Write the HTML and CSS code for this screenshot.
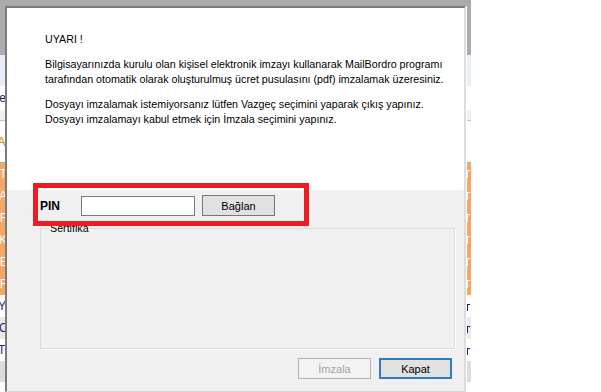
FILE: index.html
```html
<!DOCTYPE html>
<html lang="tr">
<head>
  <meta charset="UTF-8" />
  <title>MailBordro - İmzala</title>
  <link rel="stylesheet" href="styles.css">
</head>
<body>

  <div class="desktop">
    <!-- application behind the dialog -->
    <div class="app">
      <div class="app-title"></div>
      <div class="app-toolbar"></div>
      <div class="app-tabs"><span class="cut">Birime</span></div>
      <div class="app-strip"></div>
      <div class="app-head"><span class="cut head">TA</span></div>
      <div class="row orange"><span class="cut">RT</span><span class="mark"></span></div>
      <div class="row orange"><span class="cut">AA</span><span class="mark"></span></div>
      <div class="row orange"><span class="cut">RR</span><span class="mark"></span></div>
      <div class="row orange"><span class="cut">KK</span><span class="mark"></span></div>
      <div class="row orange"><span class="cut">RE</span><span class="mark"></span></div>
      <div class="row orange"><span class="cut">RR</span><span class="mark"></span></div>
      <div class="row"><span class="cut dark">AY</span><span class="stub"></span></div>
      <div class="row alt"><span class="cut dark">EC</span><span class="stub"></span></div>
      <div class="row"><span class="cut dark">AT</span><span class="stub"></span></div>
      <div class="row foot"></div>
    </div>

    <div class="dialog">
      <div class="dialog-msg">
        <p>UYARI !</p>
        <p>Bilgisayarınızda kurulu olan kişisel elektronik imzayı kullanarak MailBordro programı<br>
        tarafından otomatik olarak oluşturulmuş ücret pusulasını (pdf) imzalamak üzeresiniz.</p>
        <p>Dosyayı imzalamak istemiyorsanız lütfen Vazgeç seçimini yaparak çıkış yapınız.<br>
        Dosyayı imzalamayı kabul etmek için İmzala seçimini yapınız.</p>
      </div>

      <div class="dialog-body">
        <div class="pin-row">
          <label for="pin">PIN</label>
          <input type="password" id="pin">
          <button class="btn">Bağlan</button>
        </div>

        <fieldset class="cert">
          <legend>Sertifika</legend>
        </fieldset>

        <div class="actions">
          <button class="btn" disabled>İmzala</button>
          <button class="btn primary">Kapat</button>
        </div>
      </div>

      <!-- red marker drawn over the screenshot -->
      <div class="highlight"></div>
    </div>
  </div>

</body>
</html>
```

FILE: styles.css
```css
body {
  margin: 0;
  background: #fff;
  overflow: hidden;
  font-family: "Liberation Sans", Arial, sans-serif;
}

.desktop {
  position: relative;
  width: 601px;
  height: 392px;
}

/* background application */
.app {
  width: 471px;
  height: 392px;
  display: flex;
  flex-direction: column;
  background: #fff;
  font-size: 12px;
}

.app-title {
  height: 55px;
  background: #ababab;
}

.app-toolbar {
  height: 31px;
  background: #e7eefa;
}

.app-tabs {
  height: 24px;
  display: flex;
  align-items: center;
  color: #1e1e50;
}

.app-strip {
  height: 10px;
  background: #f0f0f0;
  border-bottom: 1px solid #c4c4c4;
}

.app-head {
  height: 41px;
  display: flex;
  align-items: center;
  border-bottom: 1px solid #a8a8a8;
}

.row {
  height: 22px;
  display: flex;
  align-items: center;
  justify-content: space-between;
  flex-shrink: 0;
}

.row.orange {
  background: #f5a665;
  color: #fff;
}

.row.alt {
  background: #e9e9e9;
}

.row.foot {
  height: 21px;
  background: #dcdcdc;
}

.cut {
  margin-left: -9px;
  white-space: nowrap;
}

.app-tabs .cut {
  margin-left: -28px;
}

.cut.dark {
  color: #1a2a6c;
}

.cut.head {
  color: #c58a00;
}

.mark {
  width: 2px;
  height: 7px;
  margin-right: 1px;
  border-top: 1px solid #fff6e8;
  border-left: 1px solid #fff6e8;
}

.stub {
  width: 2px;
  height: 6px;
  margin: 3px 1px 0 0;
  border-top: 1px solid #1a2a6c;
  border-left: 1px solid #1a2a6c;
}

/* dialog window */
.dialog {
  position: absolute;
  left: 5px;
  top: 6px;
  width: 457px;
  height: 383px;
  border-left: 2px solid #7b7b7b;
  border-top: 2px solid #7b7b7b;
  border-right: 2px solid #dcdcdc;
  border-bottom: 1px solid #d8d8d8;
  box-shadow: 1px 0 0 #fff;
  background: #f0f0f0;
  font-size: 10.7px;
  color: #000;
}

.dialog-msg {
  height: 182px;
  box-sizing: border-box;
  background: #fff;
  padding: 24px 0 0 38px;
  line-height: 15px;
}

.dialog-msg p {
  margin: 0 0 10px;
}

.dialog-body {
  padding: 5px 12px 0 33px;
}

.pin-row {
  display: flex;
  align-items: center;
  height: 21px;
}

.pin-row label {
  width: 41px;
  font-size: 12px;
  font-weight: bold;
}

.pin-row input {
  width: 114px;
  height: 20px;
  box-sizing: border-box;
  margin: 0 7px 0 0;
  border: 1px solid #7a7a7a;
  padding: 0 3px;
  background: #fff;
}

.btn {
  width: 73px;
  height: 21px;
  box-sizing: border-box;
  padding: 0;
  border: 1px solid #777;
  background: #e1e1e1;
  font-family: inherit;
  font-size: 11px;
  color: #000;
}

.btn:disabled {
  background: #f3f3f3;
  border-color: #adb2b5;
  color: #a2a2a2;
}

.btn.primary {
  border-color: #2f7cc0;
  box-shadow: inset 0 0 0 1px #2f7cc0;
}

.cert {
  width: 415px;
  height: 127px;
  box-sizing: border-box;
  margin: 6px 0 0;
  padding: 0 8px;
  border: 1px solid #d5dde3;
  box-shadow: 1px 1px 0 #fff;
}

.cert legend {
  padding: 0 1px;
  line-height: 12px;
}

.actions {
  display: flex;
  justify-content: flex-end;
  gap: 8px;
  margin-top: 9px;
}

.highlight {
  position: absolute;
  left: 26px;
  top: 175px;
  width: 276px;
  height: 43px;
  box-sizing: border-box;
  border: 5px solid #ed1c24;
}
```
